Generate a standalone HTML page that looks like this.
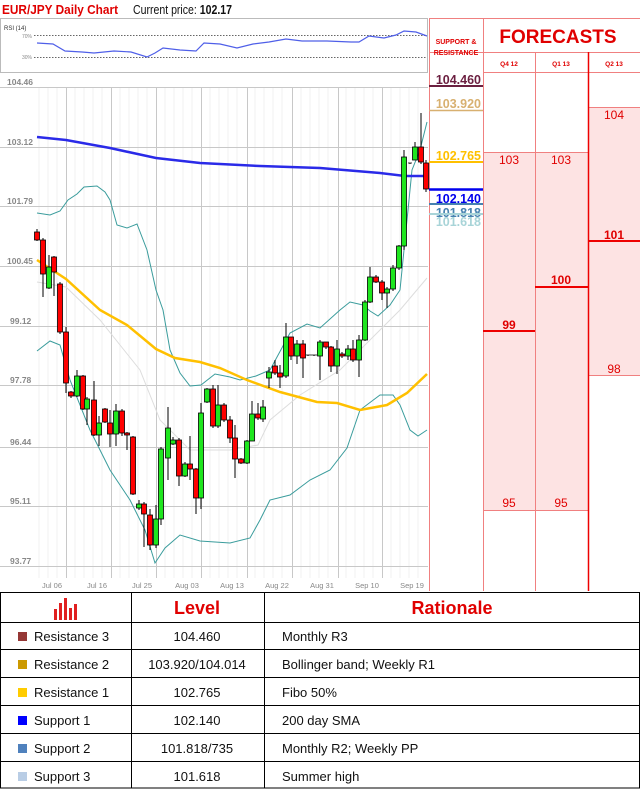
<!DOCTYPE html>
<html><head><meta charset="utf-8"><style>
*{margin:0;padding:0}body{width:640px;height:789px;overflow:hidden;background:#fff;font-family:"Liberation Sans",sans-serif;position:relative}
</style></head><body>
<svg width="640" height="789" style="position:absolute;left:0;top:0" font-family="Liberation Sans, sans-serif">
<text x="2" y="14" font-size="13" font-weight="bold" fill="#e00000" textLength="116" lengthAdjust="spacingAndGlyphs">EUR/JPY Daily Chart</text>
<text x="133" y="14" font-size="12.5" fill="#111" textLength="99" lengthAdjust="spacingAndGlyphs">Current price: <tspan font-weight="bold">102.17</tspan></text>
<!-- RSI box -->
<rect x="0.5" y="18.5" width="427" height="54" fill="#fff" stroke="#bbb"/>
<text x="4" y="30" font-size="6" fill="#333">RSI (14)</text>
<text x="22" y="38" font-size="5" fill="#888">70%</text><text x="22" y="59" font-size="5" fill="#888">30%</text>
<line x1="34" y1="35.5" x2="427" y2="35.5" stroke="#666" stroke-dasharray="1.5,1.5"/>
<line x1="34" y1="57.5" x2="427" y2="57.5" stroke="#666" stroke-dasharray="1.5,1.5"/>
<polyline fill="none" stroke="#4f5fe8" stroke-width="1.2" points="37,43 53,44 65,51 82,52 94,53 114,51 131,52 147,57 155,53 163,48 180,50 196,51 204,43 220,44 237,48 253,44 269,42 286,39 302,41 327,41 351,42 359,42 369,36 384,38 396,35 404,31 416,32 427,36"/>
<!-- chart grid -->
<g stroke="#f2f2f2" stroke-width="1">
<path d="M48 87V578M57 87V578M75 87V578M84 87V578M93 87V578M102 87V578M120 87V578M129 87V578M138 87V578M147 87V578M165 87V578M174 87V578M183 87V578M192 87V578M210 87V578M219 87V578M228 87V578M237 87V578M255 87V578M264 87V578M273 87V578M282 87V578M301 87V578M310 87V578M319 87V578M328 87V578M346 87V578M355 87V578M364 87V578M373 87V578M391 87V578M400 87V578M409 87V578M418 87V578M39 87V578"/>
</g>
<g stroke="#c8c8c8" stroke-width="1">
<path d="M0 87.5H428M0 147.5H428M0 206.5H428M0 266.5H428M0 326.5H428M0 385.5H428M0 447.5H428M0 506.5H428M0 566.5H428"/>
<path d="M66.5 87V578M111.5 87V578M156.5 87V578M201.5 87V578M247.5 87V578M292.5 87V578M338.5 87V578M382.5 87V578"/>
</g>
<g font-size="8.5" fill="#888" font-weight="bold">
<text x="7" y="85">104.46</text><text x="7" y="145">103.12</text><text x="7" y="204">101.79</text><text x="7" y="264">100.45</text><text x="10" y="324">99.12</text><text x="10" y="383">97.78</text><text x="10" y="445">96.44</text><text x="10" y="504">95.11</text><text x="10" y="564">93.77</text>
</g>
<g font-size="7.5" fill="#888" text-anchor="middle">
<text x="52" y="588">Jul 06</text><text x="97" y="588">Jul 16</text><text x="142" y="588">Jul 25</text><text x="187" y="588">Aug 03</text><text x="232" y="588">Aug 13</text><text x="277" y="588">Aug 22</text><text x="322" y="588">Aug 31</text><text x="367" y="588">Sep 10</text><text x="412" y="588">Sep 19</text>
</g>
<!-- indicators -->
<polyline fill="none" stroke="#ddd" stroke-width="1" points="37,282 66,287 100,320 140,370 160,420 190,450 230,450 258,445 270,420 300,395 340,370 380,330 400,310 427,278"/>
<polyline fill="none" stroke="#3a9c9c" stroke-width="1" points="37,213 50,215 60,211 68,200 77,194 84,187 97,186 105,192 110,200 117,225 127,228 137,224 147,250 156,290 163,310 170,350 180,373 190,386 201,385 215,374 230,377 240,380 256,376 270,370 290,333 307,324 320,328 340,310 350,302 363,305 370,311 378,316 390,305 400,290 404,250 412,170 420,150 427,122"/>
<polyline fill="none" stroke="#3a9c9c" stroke-width="1" points="37,351 50,341 60,345 70,380 90,430 110,470 130,500 145,530 155,563 165,548 180,535 200,541 230,543 250,538 260,520 270,500 290,495 310,480 330,470 347,448 360,410 380,395 393,395 400,405 410,430 418,436 427,430"/>
<polyline fill="none" stroke="#ffc000" stroke-width="2.5" points="37,260 66,279 100,310 127,325 156,349 175,358 200,362 220,368 247,380 280,392 317,402 337,403 360,410 387,405 407,393 427,374"/>
<polyline fill="none" stroke="#2a2ae8" stroke-width="2.5" points="37,137 66,140 110,148 156,158 200,163 260,166 320,168 380,173 405,176 427,176"/>
<!-- candles -->
<g stroke="#000" stroke-width="1">
<path d="M37 229V241M43 238V297M49 255V289M54 256V296M60 282V334M66 327V393M71 391V398M77 370V397M83 375V410M87 397V425M94 381V436M99 416V446M105 408V423M110 410V447M116 404V446M122 409V436M127 432V450M133 436V495M139 500V510M144 502V547M150 509V550M156 505V548M161 447V525M168 407V480M173 437V445M179 438V486M185 462V477M190 436V480M196 468V514M201 403V509M207 388V403M213 385V428M218 385V428M224 403V422M230 416V443M235 425V478M241 458V464M247 440V464M252 401V441M258 403V420M263 400V422M269 367V388M275 360V375M280 365V388M286 323V378M291 337V360M297 340V364M303 340V378M308 355V356M314 355V356M320 340V380M326 342V349M331 346V372M337 340V374M342 352V358M348 345V360M353 340V362M359 335V377M365 300V341M370 267V303M376 275V283M382 280V300M387 287V308M393 265V291M399 245V270M404 150V250M410 163V164M415 142V160M421 113V164M426 160V192"/>
</g>
<g stroke="#000" stroke-width="0.8">
<g fill="#f00">
<rect x="34.5" y="232" width="5" height="8"/><rect x="40.5" y="240" width="5" height="34"/><rect x="51.5" y="257" width="5" height="15"/><rect x="57.5" y="284" width="5" height="48"/><rect x="63.5" y="332" width="5" height="51"/><rect x="68.5" y="392" width="5" height="4"/><rect x="80.5" y="376" width="5" height="33"/><rect x="91.5" y="400" width="5" height="35"/><rect x="102.5" y="409" width="5" height="13"/><rect x="107.5" y="423" width="5" height="11"/><rect x="119.5" y="411" width="5" height="22"/><rect x="124.5" y="433" width="5" height="2"/><rect x="130.5" y="437" width="5" height="57"/><rect x="141.5" y="504" width="5" height="10"/><rect x="147.5" y="515" width="5" height="30"/><rect x="176.5" y="440" width="5" height="36"/><rect x="187.5" y="464" width="5" height="5"/><rect x="193.5" y="469" width="5" height="29"/><rect x="210.5" y="389" width="5" height="37"/><rect x="221.5" y="405" width="5" height="15"/><rect x="227.5" y="420" width="5" height="18"/><rect x="232.5" y="438" width="5" height="21"/><rect x="238.5" y="459" width="5" height="4"/><rect x="255.5" y="414" width="5" height="4"/><rect x="272.5" y="366" width="5" height="7"/><rect x="277.5" y="373" width="5" height="4"/><rect x="288.5" y="337" width="5" height="19"/><rect x="300.5" y="344" width="5" height="14"/><rect x="323.5" y="342" width="5" height="5"/><rect x="328.5" y="347" width="5" height="19"/><rect x="339.5" y="354" width="5" height="2"/><rect x="350.5" y="349" width="5" height="11"/><rect x="373.5" y="277" width="5" height="5"/><rect x="379.5" y="282" width="5" height="11"/><rect x="418.5" y="147" width="5" height="15"/><rect x="423.5" y="163" width="5" height="26"/>
</g>
<g fill="#1ee61e">
<rect x="46.5" y="267" width="5" height="21"/><rect x="74.5" y="376" width="5" height="20"/><rect x="84.5" y="399" width="5" height="10"/><rect x="96.5" y="423" width="5" height="12"/><rect x="113.5" y="411" width="5" height="23"/><rect x="136.5" y="504" width="5" height="4"/><rect x="153.5" y="519" width="5" height="26"/><rect x="158.5" y="449" width="5" height="70"/><rect x="165.5" y="428" width="5" height="30"/><rect x="170.5" y="440" width="5" height="4"/><rect x="182.5" y="464" width="5" height="12"/><rect x="198.5" y="413" width="5" height="85"/><rect x="204.5" y="389" width="5" height="13"/><rect x="215.5" y="405" width="5" height="21"/><rect x="244.5" y="441" width="5" height="22"/><rect x="249.5" y="414" width="5" height="27"/><rect x="260.5" y="407" width="5" height="12"/><rect x="266.5" y="372" width="5" height="6"/><rect x="283.5" y="337" width="5" height="39"/><rect x="294.5" y="344" width="5" height="12"/><rect x="317.5" y="342" width="5" height="14"/><rect x="334.5" y="349" width="5" height="17"/><rect x="345.5" y="349" width="5" height="7"/><rect x="356.5" y="340" width="5" height="20"/><rect x="362.5" y="302" width="5" height="38"/><rect x="367.5" y="277" width="5" height="25"/><rect x="384.5" y="289" width="5" height="4"/><rect x="390.5" y="268" width="5" height="21"/><rect x="396.5" y="246" width="5" height="22"/><rect x="401.5" y="157" width="5" height="89"/><rect x="412.5" y="147" width="5" height="13"/>
</g>
<path d="M306 355H317M408 163H412"/>
</g>
<!-- right panel -->
<rect x="483" y="152" width="105" height="358" fill="#fde3e3"/>
<rect x="588" y="107" width="52" height="268" fill="#fde3e3"/>
<g stroke="#f08080" stroke-width="1" fill="none">
<path d="M429.5 18V591M483.5 18V591M535.5 52V591M429 18.5H640M429 52.5H640M483 72.5H640M483 152.5H588M483 510.5H588M588 107.5H640M588 375.5H640"/>
</g>
<path d="M588.5 52V591" stroke="#e00" stroke-width="1.5"/>
<g fill="#e00000" font-weight="bold" text-anchor="middle">
<text x="456" y="44" font-size="7">SUPPORT &amp;</text><text x="456" y="55" font-size="7">RESISTANCE</text>
<text x="558" y="43" font-size="19">FORECASTS</text>
<text x="509" y="66" font-size="6.5">Q4 12</text><text x="561" y="66" font-size="6.5">Q1 13</text><text x="614" y="66" font-size="6.5">Q2 13</text>
</g>
<g fill="#e00000" font-size="12" text-anchor="middle">
<text x="509" y="164">103</text><text x="561" y="164">103</text><text x="614" y="119">104</text>
<text x="614" y="373">98</text><text x="509" y="507">95</text><text x="561" y="507">95</text>
<g font-weight="bold"><text x="614" y="239">101</text><text x="561" y="284">100</text><text x="509" y="329">99</text></g>
</g>
<g stroke="#e00" stroke-width="2"><path d="M588 241H640M535 287H588M483 331H535"/></g>
<g font-size="12.5" font-weight="bold" text-anchor="end">
<text x="481" y="84" fill="#6b1f40">104.460</text>
<text x="481" y="108" fill="#d8b070">103.920</text>
<text x="481" y="160" fill="#ffc000">102.765</text>
<text x="481" y="203" fill="#0000ee">102.140</text>
<text x="481" y="217" fill="#4682b0">101.818</text>
<text x="481" y="226" fill="#a8d4d8">101.618</text>
</g>
<path d="M429 86H483" stroke="#6b2040" stroke-width="2"/>
<path d="M429 110.5H483" stroke="#d8b070" stroke-width="1.5"/>
<path d="M429 162H483" stroke="#ffc000" stroke-width="2"/>
<path d="M429 189.5H483" stroke="#0000ee" stroke-width="2.5"/>
<path d="M429 204H483" stroke="#4682b0" stroke-width="2"/>
<path d="M429 214H483" stroke="#a8d4d8" stroke-width="2"/>
<!-- table -->
<g stroke="#000" stroke-width="1" fill="none">
<rect x="0.5" y="592.5" width="639" height="195.5"/>
<path d="M131.5 592V788M264.5 592V788M0 622.5H640M0 649.5H640M0 677.5H640M0 705.5H640M0 733.5H640M0 761.5H640"/>
</g>
<g fill="#e02020"><rect x="54" y="609" width="3" height="11"/><rect x="59" y="603" width="3" height="17"/><rect x="64" y="598" width="3" height="22"/><rect x="69" y="608" width="3" height="12"/><rect x="74" y="604" width="3" height="16"/></g>
<g fill="#e00000" font-weight="bold" font-size="18" text-anchor="middle"><text x="197" y="614">Level</text><text x="452" y="614">Rationale</text></g>
<rect x="18" y="632" width="9" height="9" fill="#953735"/><rect x="18" y="660" width="9" height="9" fill="#cc9900"/><rect x="18" y="688" width="9" height="9" fill="#ffcc00"/><rect x="18" y="716" width="9" height="9" fill="#0000ff"/><rect x="18" y="744" width="9" height="9" fill="#4f81bd"/><rect x="18" y="772" width="9" height="9" fill="#b9cde5"/>
<g font-size="13" fill="#111">
<text x="34" y="641">Resistance 3</text><text x="34" y="669">Resistance 2</text><text x="34" y="697">Resistance 1</text><text x="34" y="725">Support 1</text><text x="34" y="753">Support 2</text><text x="34" y="781">Support 3</text>
<g text-anchor="middle"><text x="197" y="641">104.460</text><text x="197" y="669">103.920/104.014</text><text x="197" y="697">102.765</text><text x="197" y="725">102.140</text><text x="197" y="753">101.818/735</text><text x="197" y="781">101.618</text></g>
<text x="282" y="641">Monthly R3</text><text x="282" y="669">Bollinger band; Weekly R1</text><text x="282" y="697">Fibo 50%</text><text x="282" y="725">200 day SMA</text><text x="282" y="753">Monthly R2; Weekly PP</text><text x="282" y="781">Summer high</text>
</g>
</svg>
</body></html>
